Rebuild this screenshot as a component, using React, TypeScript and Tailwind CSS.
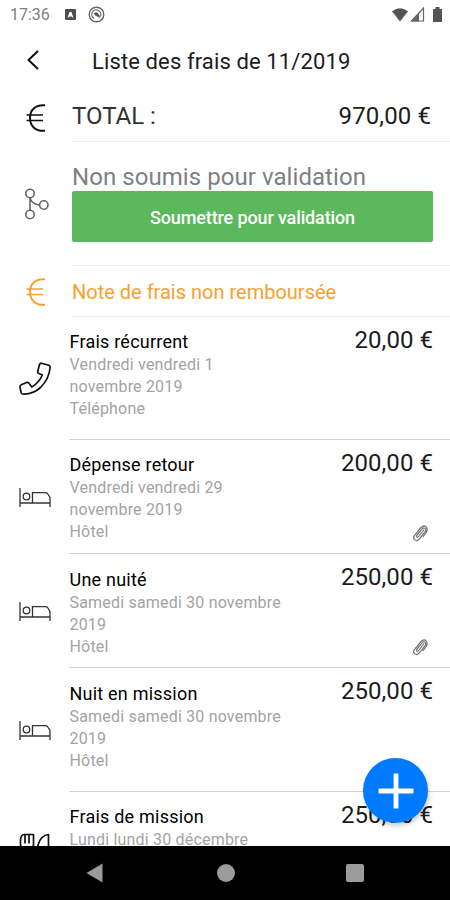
import React from "react";

type IconKind = "phone" | "bed" | "meal";

interface Expense {
  title: string;
  details: string[];
  amount: string;
  icon: IconKind;
  clip: boolean;
  height: string;
  inset: string;
}

const expenses: Expense[] = [
  { title: "Frais récurrent", details: ["Vendredi vendredi 1", "novembre 2019", "Téléphone"], amount: "20,00 €", icon: "phone", clip: false, height: "h-[123px]", inset: "pt-[13px]" },
  { title: "Dépense retour", details: ["Vendredi vendredi 29", "novembre 2019", "Hôtel"], amount: "200,00 €", icon: "bed", clip: true, height: "h-[114px]", inset: "pt-[13px]" },
  { title: "Une nuité", details: ["Samedi samedi 30 novembre", "2019", "Hôtel"], amount: "250,00 €", icon: "bed", clip: true, height: "h-[114px]", inset: "pt-[14px]" },
  { title: "Nuit en mission", details: ["Samedi samedi 30 novembre", "2019", "Hôtel"], amount: "250,00 €", icon: "bed", clip: false, height: "h-[124px]", inset: "pt-[14px]" },
  { title: "Frais de mission", details: ["Lundi lundi 30 décembre"], amount: "250,00 €", icon: "meal", clip: false, height: "h-[114px]", inset: "pt-[13px]" },
];

function Euro({ className }: { className: string }) {
  return (
    <svg width="20" height="28" viewBox="0 0 20 28" fill="none" stroke="currentColor" strokeWidth="2" className={className}>
      <path d="M19 1.300C9.500.5 4 6 4 14S9.500 27.500 19 26.700" />
      <path d="M.5 11h16.500M.5 16.500h16.500" strokeWidth="1.500" />
    </svg>
  );
}

function RowIcon({ kind }: { kind: IconKind }) {
  if (kind === "phone") {
    return (
      <svg width="32" height="33" viewBox="0 0 32 33" fill="none" stroke="#111" strokeWidth="1.700" strokeLinejoin="round">
        <path d="M22.300 1.200 30 3.200Q31.500 4 31 6C30.500 12.500 27 20 21.500 25.500 16 30.500 9.500 32.300 4 32Q2.500 32 2.100 30.500L.9 24.800Q.9 23.500 2.300 22.800L8 20.300Q9.300 20.200 10 21.200L12.800 25C18 22 21.200 18.200 23.300 13L19.300 11.200Q18.500 10.500 18.800 9.300L20.500 2.500Q21 1.100 22.300 1.200Z" />
      </svg>
    );
  }
  if (kind === "bed") {
    return (
      <svg width="32" height="19" viewBox="0 0 32 19" fill="none" stroke="#333" strokeWidth="1.300">
        <path d="M1 0v19M1 15h30M31 19V9.500L28.500 5.500Q28 4.700 26.500 4.700H13.500V15" />
        <circle cx="7.500" cy="8.500" r="3.300" />
      </svg>
    );
  }
  return (
    <svg width="32" height="34" viewBox="0 0 32 34" fill="none" stroke="#111" strokeWidth="1.700" strokeLinejoin="round">
      <path d="M6 32V17Q1.500 15 1.500 11V7Q2 1.500 5 1.500H14.500V11Q14.500 15 11 17V32ZM6 2v8.500M10 2v8.500M19 17.500V12Q22 2 29.500 1.500V32h-4V17.500Z" />
    </svg>
  );
}

function Clip() {
  return (
    <svg width="15" height="17" viewBox="0 0 15 17" fill="none" stroke="#707070" strokeWidth="1.200" strokeLinecap="round" strokeLinejoin="round">
      <path d="M10.700 5 5.600 11.500Q4.700 12.700 3.900 12T4 10L9 3.800Q10.500 2.200 12 3.300T12.300 6.300L7 13.200Q4.300 16.800 1.900 14.900T1.600 10.300L7.800 2.600Q10.800-.4 13 1.600T13.200 7.500L10.200 11.400" />
    </svg>
  );
}

function StatusBar() {
  return (
    <div className="flex h-[29px] shrink-0 items-center pl-[10px] pr-[8px] text-[#808080]">
      <span className="w-[55px] text-[16px]">17:36</span>
      <svg width="11" height="11" viewBox="0 0 11 11">
        <rect width="11" height="11" rx="1" fill="#4d4d4d" />
        <path d="m2.500 9 2-6h2l2 6-2-1.500h-2Z" fill="#fff" />
      </svg>
      <svg width="17" height="17" viewBox="0 0 17 17" fill="none" stroke="#666" className="ml-[12px]">
        <circle cx="8.500" cy="8.500" r="7.300" strokeWidth="1.400" />
        <path d="M6 12.500A4.600 4.600 0 1 1 12.500 10.500" strokeWidth="1.200" />
        <path d="M6 7.500Q9 5 11 9L12 11.500 7.500 9.500Z" fill="#555" strokeWidth=".5" />
      </svg>
      <svg width="16" height="14" viewBox="0 0 16 14" className="ml-auto">
        <path d="M0 3.300Q8-3 16 3.300L8 13.500Z" fill="#555" />
      </svg>
      <svg width="15" height="15" viewBox="0 0 15 15" className="ml-[2px]">
        <path d="M1.500 14H13.500V1Z" fill="none" stroke="#666" strokeWidth="1.200" />
        <path d="M1 14.500H9V6Z" fill="#666" />
      </svg>
      <svg width="9" height="15" viewBox="0 0 9 15" className="ml-[8px]">
        <path d="M0 2h2.500V0h4v2H9v13H0Z" fill="#555" />
      </svg>
    </div>
  );
}

function ExpenseRow({ item }: { item: Expense }) {
  return (
    <div className={`flex shrink-0 ${item.height}`}>
      <div className={`flex w-[69px] items-center justify-center pl-[1px] ${item.icon === "meal" ? "pt-[2px]" : ""}`}>
        <RowIcon kind={item.icon} />
      </div>
      <div className="flex flex-1 justify-between border-b border-[#d2d2d2] pr-[17px]">
        <div className={`pl-[0.5px] ${item.inset}`}>
          <div className="whitespace-nowrap text-[18px] leading-[24px] tracking-[0.22px] text-black">{item.title}</div>
          <div className="whitespace-nowrap text-[16px] leading-[22px] tracking-[0.19px] text-[#a3a3a3]">
            {item.details.map((line) => (
              <div key={line}>{line}</div>
            ))}
          </div>
        </div>
        <div className="flex flex-col items-end justify-between pb-[11px] pt-[8px]">
          <span className="whitespace-nowrap text-[24px] leading-[30px] tracking-[0.05px] text-[#1c1c1c]">{item.amount}</span>
          {item.clip && (
            <span className="pr-[5px]">
              <Clip />
            </span>
          )}
        </div>
      </div>
    </div>
  );
}

export default function App() {
  return (
    <div className="relative flex h-[900px] w-[450px] flex-col overflow-hidden bg-white font-['Roboto',sans-serif]">
      <StatusBar />
      <header className="flex h-[64px] shrink-0 items-center pl-[27px]">
        <svg width="12" height="20" viewBox="0 0 12 20" fill="none" stroke="#111" strokeWidth="2" className="-mt-[2px]">
          <path d="M11 1 1.500 10 11 19" />
        </svg>
        <h1 className="ml-[53px] whitespace-nowrap text-[22px] tracking-[0.12px] text-[#1c1c1c]">Liste des frais de 11/2019</h1>
      </header>

      <div className="flex h-[49px] shrink-0">
        <div className="flex w-[72px] items-center justify-center">
          <Euro className="text-[#111]" />
        </div>
        <div className="flex flex-1 items-center justify-between border-b border-[#ededed] pb-[2px] pr-[19px] text-[24px] text-[#333]">
          <span>TOTAL :</span>
          <span className="tracking-[0.1px] text-[#1c1c1c]">970,00 €</span>
        </div>
      </div>

      <div className="flex h-[124px] shrink-0">
        <div className="flex w-[72px] items-center justify-center pl-[1px]">
          <svg width="24" height="32" viewBox="0 0 24 32" fill="none" stroke="#666" strokeWidth="1.600">
            <circle cx="5" cy="5.500" r="4.200" />
            <circle cx="5" cy="26.500" r="4.200" />
            <circle cx="18.800" cy="17" r="4.200" />
            <path d="M5 9.700v12.600M5 9.700Q6.500 16.500 14.600 17" />
          </svg>
        </div>
        <div className="flex-1 border-b border-[#ededed] pr-[17px] pt-[20px]">
          <div className="whitespace-nowrap pt-[1px] text-[24px] leading-[28px] tracking-[0.06px] text-[#808080]">Non soumis pour validation</div>
          <button className="flex h-[51px] w-full items-center justify-center rounded-[2px] bg-[#5cb85c] pt-[1px] text-[18px] font-medium tracking-[-0.13px] text-white">
            Soumettre pour validation
          </button>
        </div>
      </div>

      <div className="flex h-[51px] shrink-0 text-[#f9a12e]">
        <div className="flex w-[72px] items-center justify-center">
          <Euro className="" />
        </div>
        <div className="flex flex-1 items-center whitespace-nowrap border-b border-[#ededed] pt-[2px] text-[20px]">
          Note de frais non remboursée
        </div>
      </div>

      <main className="flex min-h-0 flex-1 flex-col overflow-hidden">
        {expenses.map((item) => (
          <ExpenseRow key={item.title} item={item} />
        ))}
      </main>

      <nav className="flex h-[54px] shrink-0 items-center bg-black pl-[86px]">
        <svg width="17" height="20" viewBox="0 0 17 20">
          <path d="M16.500.5v19L.5 10Z" fill="#9b9b9b" />
        </svg>
        <div className="ml-[114px] size-[18px] rounded-full bg-[#9b9b9b]" />
        <div className="ml-[111px] size-[18px] rounded-[2px] bg-[#9b9b9b]" />
      </nav>

      <button className="absolute left-[363px] top-[758px] flex size-[65px] items-center justify-center rounded-full bg-[#007aff] shadow-[1px_3px_5px_rgba(0,0,0,0.2)]">
        <svg width="36" height="36" viewBox="0 0 36 36" stroke="#fff" strokeWidth="4.800">
          <path d="M18 .5v35M.5 18h35" />
        </svg>
      </button>
    </div>
  );
}
